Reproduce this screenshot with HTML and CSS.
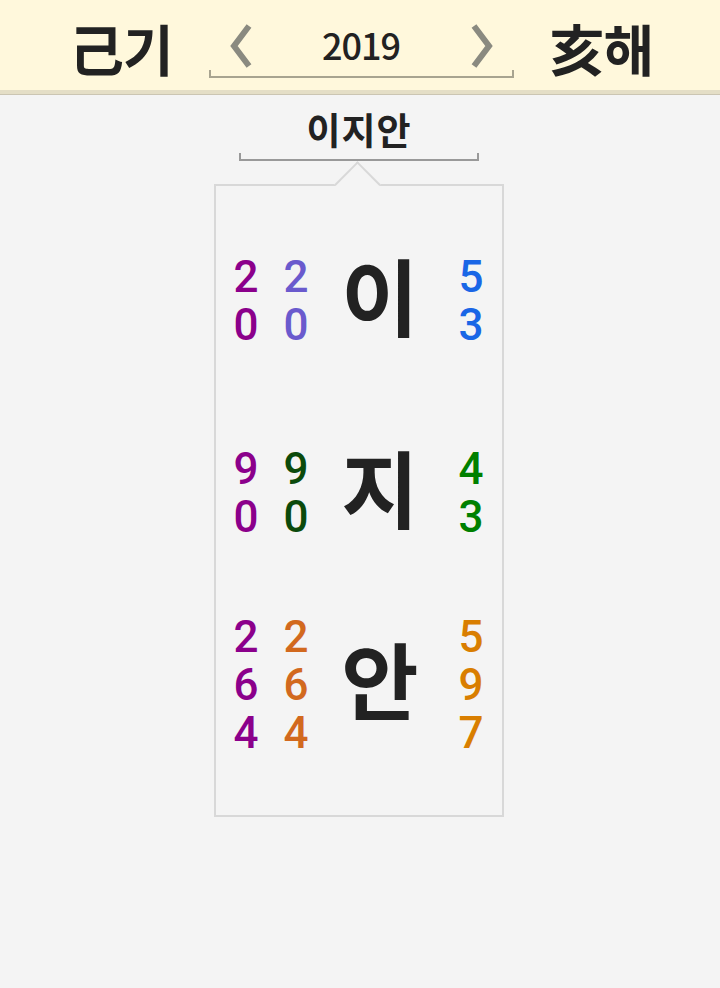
FILE: index.html
```html
<!DOCTYPE html>
<html lang="ko">
<head>
<meta charset="utf-8">
<link rel="stylesheet" href="styles.css">
</head>
<body>
<header class="topbar">
  <div class="ganji">己기</div>
  <div class="yearnav">
    <div class="yearrow">
      <svg class="chev" viewBox="0 0 24 44" width="24" height="44"><polyline points="20,2 5,22 20,42" fill="none" stroke="#8a8a80" stroke-width="6"/></svg>
      <span class="year">2019</span>
      <svg class="chev" viewBox="0 0 24 44" width="24" height="44"><polyline points="4,2 19,22 4,42" fill="none" stroke="#8a8a80" stroke-width="6"/></svg>
    </div>
    <div class="bracket bracket-year"></div>
  </div>
  <div class="ganji">亥해</div>
</header>
<main class="content">
  <div class="name-title">이지안</div>
  <div class="bracket bracket-name"></div>
  <section class="card">
    <div class="notch"></div>
    <div class="row">
      <div class="nums c-purple"><span>2</span><span>0</span></div>
      <div class="nums c-slate"><span>2</span><span>0</span></div>
      <div class="syl">이</div>
      <div class="nums c-blue"><span>5</span><span>3</span></div>
    </div>
    <div class="row">
      <div class="nums c-purple"><span>9</span><span>0</span></div>
      <div class="nums c-dgreen"><span>9</span><span>0</span></div>
      <div class="syl">지</div>
      <div class="nums c-green"><span>4</span><span>3</span></div>
    </div>
    <div class="row">
      <div class="nums c-purple"><span>2</span><span>6</span><span>4</span></div>
      <div class="nums c-choc"><span>2</span><span>6</span><span>4</span></div>
      <div class="syl">안</div>
      <div class="nums c-orange"><span>5</span><span>9</span><span>7</span></div>
    </div>
  </section>
</main>
</body>
</html>
```
FILE: styles.css
```css
html, body {
  margin: 0;
  padding: 0;
}
body {
  background: #f4f4f4;
  font-family: "Noto Sans CJK KR", "Noto Sans", sans-serif;
  color: #222;
  width: 720px;
  height: 988px;
  overflow: hidden;
}
.topbar {
  height: 90px;
  background: #fff8dc;
  border-bottom: 4px solid #e4dec6;
  box-shadow: 0 1px 0 #cbc5b2;
  display: flex;
  justify-content: center;
  align-items: flex-start;
  gap: 36px;
  padding-left: 2px;
}
.ganji {
  font-size: 55px;
  font-weight: 700;
  line-height: 54px;
  margin-top: 20px;
  letter-spacing: -1px;
  color: #222;
}
.yearnav {
  width: 305px;
  margin-top: 24px;
  display: flex;
  flex-direction: column;
}
.yearrow {
  height: 46px;
  display: flex;
  align-items: flex-start;
  justify-content: space-between;
  padding: 0 20px;
}
.chev {
  display: block;
}
.year {
  font-size: 36px;
  line-height: 40px;
  font-weight: 500;
  color: #222;
  letter-spacing: -1px;
}
.bracket {
  height: 6px;
  border: 2px solid #a8a490;
  border-top: none;
  box-sizing: border-box;
}
.bracket-year {
  height: 8px;
}
.content {
  display: flex;
  flex-direction: column;
  align-items: center;
  padding-right: 2px;
}
.name-title {
  font-size: 37px;
  font-weight: 700;
  line-height: 44px;
  margin-top: 13px;
  letter-spacing: 1px;
  color: #222;
}
.bracket-name {
  width: 240px;
  height: 8px;
  border-color: #999;
  margin-top: 2px;
}
.card {
  position: relative;
  width: 290px;
  box-sizing: border-box;
  margin-top: 23px;
  border: 2px solid #d8d8d8;
  padding: 19px 0 34px;
  display: flex;
  flex-direction: column;
}
.notch {
  position: absolute;
  top: -18px;
  left: 125px;
  width: 31px;
  height: 31px;
  background: #f4f4f4;
  border-top: 2px solid #d8d8d8;
  border-left: 2px solid #d8d8d8;
  transform: rotate(45deg);
}
.row {
  height: 192px;
  display: grid;
  grid-template-columns: 60px 40px 128px 54px;
  align-items: center;
}
.nums {
  display: flex;
  flex-direction: column;
  align-items: center;
  font-family: Roboto, "Noto Sans", sans-serif;
  font-weight: 500;
  font-size: 44px;
}
.nums span {
  display: block;
  height: 48px;
  line-height: 48px;
  overflow: visible;
}
.syl {
  text-align: center;
  font-size: 84px;
  font-weight: 700;
  line-height: 100px;
  padding-bottom: 14px;
  color: #222;
}
.c-purple { color: #8b008b; }
.c-slate { color: #6a5acd; }
.c-blue { color: #1a66e6; }
.c-dgreen { color: #0b4a0b; }
.c-green { color: #008000; }
.c-choc { color: #d2691e; }
.c-orange { color: #d97e00; }
```
